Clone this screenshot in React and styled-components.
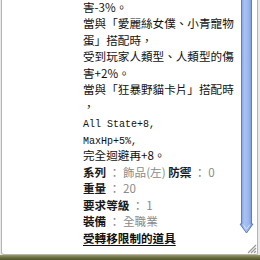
import React from "react";
import styled, { createGlobalStyle } from "styled-components";

const Global = createGlobalStyle`
  html, body { margin: 0; padding: 0; }
  body { width: 260px; height: 260px; overflow: hidden; background: #e6e6e6; }
`;

const Page = styled.div`
  width: 260px;
  height: 260px;
  display: flex;
  flex-direction: column;
  overflow: hidden;
`;

const Frame = styled.div`
  height: 255px;
  display: flex;
  padding: 0 2px 0 1px;
  background: #e9e9e9;
`;

const Panel = styled.div`
  flex: 1;
  position: relative;
  display: flex;
  background: #fff;
  border-left: 1px solid #b4b4b4;
  border-right: 1px solid #b4b4b4;
  border-bottom: 1px solid #b4b4b4;
  border-bottom-left-radius: 3px;
  border-bottom-right-radius: 2px;
  overflow: hidden;
`;

const Ground = styled.div`
  height: 5px;
  background: linear-gradient(180deg, #9c9a66 0%, #6f7040 50%, #4e5230 100%);
`;

const Content = styled.div`
  flex: 1;
  padding-left: 81px;
  margin-top: -1.5px;
  font-family: "Noto Sans CJK TC", "Noto Sans CJK SC", sans-serif;
  font-size: 11.6px;
  line-height: 16.5px;
  color: #111;
  overflow: hidden;
  white-space: nowrap;
`;

const Line = styled.div`
  height: 16.5px;
`;

const Mono = styled.span`
  font-family: "Liberation Mono", "DejaVu Sans Mono", monospace;
  font-size: 10px;
`;

const Label = styled.span`
  font-weight: 700;
  color: #1a1a1a;
`;

const Value = styled.span`
  color: #8a8a8a;
`;

const Restricted = styled.span`
  font-weight: 700;
  color: #111;
  text-decoration: underline;
  text-underline-offset: 2px;
`;

const Track = styled.div`
  width: 15px;
  margin-right: 3px;
  display: flex;
  justify-content: center;
`;

const Grip = styled.svg`
  position: absolute;
  right: 0;
  bottom: 0;
`;

function Thumb() {
  return (
    <svg width="15" height="236" viewBox="0 0 15 236">
      <defs>
        <linearGradient id="tg" x1="0" x2="1" y1="0" y2="0">
          <stop offset="0" stopColor="#6f93dc" />
          <stop offset="0.35" stopColor="#a9c2f2" />
          <stop offset="0.65" stopColor="#9ab6ee" />
          <stop offset="1" stopColor="#6a8ed8" />
        </linearGradient>
      </defs>
      <path
        d="M2.5 -2 H12.5 V224 H14 L7.5 233 L1 224 H2.5 Z"
        fill="url(#tg)"
        stroke="#5a7fcf"
        strokeWidth="1"
        strokeLinejoin="round"
      />
      <path d="M4 224.5 L7.5 229 L11 224.5" fill="none" stroke="#d6e2fa" strokeWidth="1" />
    </svg>
  );
}

export default function App() {
  return (
    <Page>
      <Global />
      <Frame>
        <Panel>
          <Content>
            <Line>害-3%。</Line>
            <Line>當與「愛麗絲女僕、小青寵物</Line>
            <Line>蛋」搭配時，</Line>
            <Line>受到玩家人類型、人類型的傷</Line>
            <Line>害+2%。</Line>
            <Line>當與「狂暴野貓卡片」搭配時</Line>
            <Line>，</Line>
            <Line><Mono>All State+8,</Mono></Line>
            <Line><Mono>MaxHp+5%,</Mono></Line>
            <Line>完全迴避再+8。</Line>
            <Line>
              <Label>系列</Label> <Value>： 飾品(左)</Value> <Label>防禦</Label> <Value>： 0</Value>
            </Line>
            <Line>
              <Label>重量</Label> <Value>： 20</Value>
            </Line>
            <Line>
              <Label>要求等級</Label> <Value>： 1</Value>
            </Line>
            <Line>
              <Label>裝備</Label> <Value>： 全職業</Value>
            </Line>
            <Line>
              <Restricted>受轉移限制的道具</Restricted>
            </Line>
          </Content>
          <Track>
            <Thumb />
          </Track>
          <Grip width="11" height="11" viewBox="0 0 11 11">
            <path d="M10 2 L2 10 M10 5 L5 10 M10 8 L8 10" stroke="#9a9a9a" strokeWidth="1.2" />
          </Grip>
        </Panel>
      </Frame>
      <Ground />
    </Page>
  );
}
